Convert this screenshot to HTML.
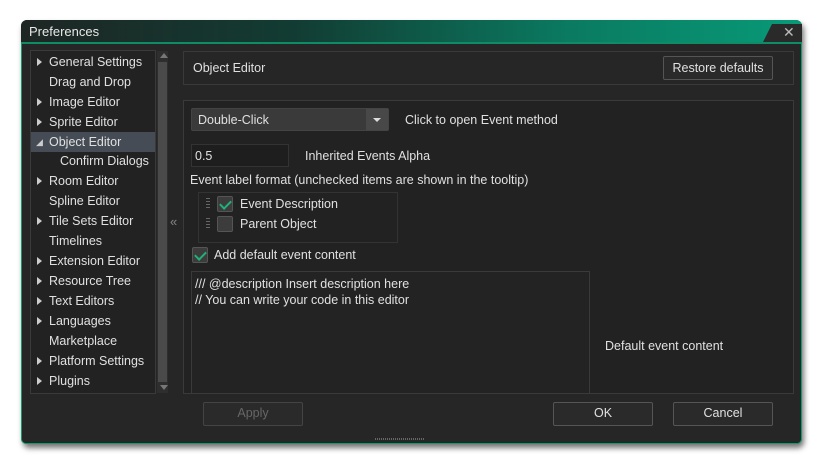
<!DOCTYPE html>
<html><head><style>
*{box-sizing:border-box;margin:0;padding:0}
body{width:822px;height:463px;background:#fff;font-family:"Liberation Sans",sans-serif;font-size:12.5px;color:#e0e0e0;position:relative;overflow:hidden}
.abs{position:absolute}
.win{left:21px;top:20px;width:781px;height:424px;border-radius:6px;background:#262626;box-shadow:2px 4px 6px rgba(0,0,0,.55)}
.title{left:21px;top:20px;width:781px;height:24px;border-radius:6px 6px 0 0;background:linear-gradient(90deg,#1e2624 0%,#123c33 35%,#0a7a60 70%,#089a78 100%);color:#e8e8e8;font-size:13px;padding:4px 0 0 8px}
.tab{left:762px;top:24px;width:40px;height:20px;background:#2a2a2a;clip-path:polygon(10px 0,100% 0,100% 100%,0 100%)}
.body{left:21px;top:42px;width:781px;height:402px;border:1px solid #109a70;border-top:2px solid #0e8c65;border-radius:0 0 5px 5px;background:#262626}
.panel{background:#222;border:1px solid #3a3a3a}
.tree div{height:20px;line-height:20px;padding-left:18px;position:relative}
.tree .a:before{content:"";position:absolute;left:6px;top:6px;border-left:5px solid #ccc;border-top:4px solid transparent;border-bottom:4px solid transparent}
.btn{border:1px solid #555;border-radius:2px;background:#2a2a2a;text-align:center;line-height:21px}
.cb{width:16px;height:16px;background:#3c3c3c;border:1px solid #555;border-radius:2px}
.chk:after{content:"";position:absolute;left:4px;top:1px;width:5px;height:9px;border:solid #21b07a;border-width:0 2px 2px 0;transform:rotate(45deg)}
.grip{width:4px;height:12px;background:repeating-linear-gradient(#666 0 1px,transparent 1px 3px)}
</style></head><body>
<div class="abs win"></div>
<div class="abs title">Preferences</div>
<div class="abs tab"></div>
<div class="abs" style="left:783px;top:24px;color:#bbb;font-size:14px">✕</div>
<div class="abs body"></div>

<div class="abs panel tree" style="left:30px;top:50px;width:126px;height:344px;padding-top:1px">
<div class="a">General Settings</div><div>Drag and Drop</div><div class="a">Image Editor</div><div class="a">Sprite Editor</div>
<div style="background:#454c55"><span style="position:absolute;left:5px;top:0;font-size:9px;color:#ccc">◢</span>Object Editor</div>
<div style="padding-left:29px;height:19px;line-height:18px">Confirm Dialogs</div>
<div class="a">Room Editor</div><div>Spline Editor</div><div class="a">Tile Sets Editor</div><div>Timelines</div>
<div class="a">Extension Editor</div><div class="a">Resource Tree</div><div class="a">Text Editors</div><div class="a">Languages</div>
<div>Marketplace</div><div class="a">Platform Settings</div><div class="a">Plugins</div>
</div>
<div class="abs" style="left:157px;top:51px;width:11px;height:342px;background:#2e2e2e"></div>
<div class="abs" style="left:158px;top:62px;width:9px;height:320px;background:#4a4a4a"></div>
<div class="abs" style="left:160px;top:53px;border-bottom:5px solid #777;border-left:4px solid transparent;border-right:4px solid transparent"></div>
<div class="abs" style="left:160px;top:385px;border-top:5px solid #777;border-left:4px solid transparent;border-right:4px solid transparent"></div>
<div class="abs" style="left:170px;top:214px;color:#888;font-size:13px">«</div>

<div class="abs panel" style="left:183px;top:51px;width:611px;height:34px;background:#262626"></div>
<div class="abs" style="left:193px;top:61px">Object Editor</div>
<div class="abs btn" style="left:663px;top:56px;width:110px;height:24px;line-height:22px">Restore defaults</div>

<div class="abs panel" style="left:183px;top:100px;width:611px;height:294px"></div>
<div class="abs" style="left:191px;top:108px;width:198px;height:23px;background:#3a3a3a;border:1px solid #444;border-radius:2px;padding:4px 6px">Double-Click</div>
<div class="abs" style="left:366px;top:109px;width:22px;height:21px;background:#484848"></div>
<div class="abs" style="left:373px;top:118px;border-top:4px solid #ddd;border-left:4px solid transparent;border-right:4px solid transparent"></div>
<div class="abs" style="left:405px;top:113px">Click to open Event method</div>
<div class="abs" style="left:191px;top:144px;width:98px;height:23px;background:#1e1e1e;border:1px solid #333;padding:4px 3px">0.5</div>
<div class="abs" style="left:305px;top:149px">Inherited Events Alpha</div>
<div class="abs" style="left:190px;top:173px">Event label format (unchecked items are shown in the tooltip)</div>
<div class="abs" style="left:198px;top:192px;width:200px;height:51px;border:1px solid #333;background:#222"></div>
<div class="abs grip" style="left:206px;top:198px"></div>
<div class="abs grip" style="left:206px;top:218px"></div>
<div class="abs cb chk" style="left:217px;top:196px"></div>
<div class="abs cb" style="left:217px;top:216px"></div>
<div class="abs" style="left:240px;top:197px">Event Description</div>
<div class="abs" style="left:240px;top:217px">Parent Object</div>
<div class="abs cb chk" style="left:192px;top:247px"></div>
<div class="abs" style="left:214px;top:248px">Add default event content</div>
<div class="abs" style="left:191px;top:271px;width:399px;height:123px;background:#232323;border:1px solid #3a3a3a;padding:4px 3px;line-height:16px">/// @description Insert description here<br>// You can write your code in this editor</div>
<div class="abs" style="left:605px;top:339px">Default event content</div>

<div class="abs btn" style="left:203px;top:402px;width:100px;height:24px;color:#666;border-color:#444">Apply</div>
<div class="abs btn" style="left:553px;top:402px;width:100px;height:24px">OK</div>
<div class="abs btn" style="left:673px;top:402px;width:100px;height:24px">Cancel</div>
<div class="abs" style="left:375px;top:438px;width:50px;height:2px;background:repeating-linear-gradient(90deg,#666 0 1px,transparent 1px 2px)"></div>
</body></html>
